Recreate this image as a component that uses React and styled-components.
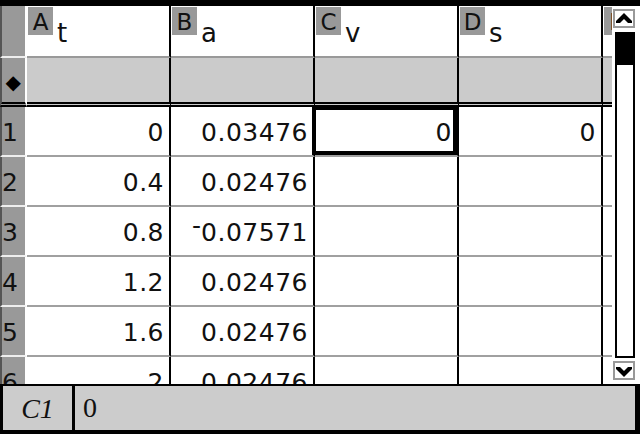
import React from "react";
import styled, { createGlobalStyle, css } from "styled-components";

const Global = createGlobalStyle`
  * { box-sizing: border-box; }
  html, body { margin: 0; padding: 0; background: #fff; }
  #root { width: 640px; height: 434px; }
`;

const Screen = styled.div`
  width: 640px;
  height: 434px;
  border-top: 6px solid #000;
  display: flex;
  flex-direction: column;
  overflow: hidden;
  background: #fff;
  font-family: "DejaVu Sans", sans-serif;
  color: #111;
`;

const Main = styled.div`
  flex: 1;
  min-height: 0;
  display: flex;
  overflow: hidden;
`;

const Sheet = styled.div`
  width: 612px;
  flex: none;
  display: grid;
  grid-template-columns: 27px repeat(4, 144px) 9px;
  grid-template-rows: 52px 49px;
  grid-auto-rows: 50px;
  align-content: start;
  overflow: hidden;
`;

const RowHead = styled.div`
  background: #999;
  border-left: 2px solid #555;
  border-right: 2px solid #fff;
  border-bottom: ${(p) => (p.$double ? "5px double #000" : "2px solid #eee")};
  display: flex;
  align-items: center;
  justify-content: ${(p) => (p.$center ? "center" : "flex-start")};
  padding-top: ${(p) => (p.$center ? "4px" : "2px")};
  font-size: 25px;
  line-height: 29px;
  letter-spacing: 0.5px;
  overflow: hidden;
`;

const Diamond = styled.span`
  font-size: 20px;
  line-height: 20px;
  color: #000;
`;

const HeadCell = styled.div`
  background: #fff;
  border-right: ${(p) => (p.$last ? "none" : "2px solid #000")};
  border-bottom: 2px solid #999;
  display: flex;
  align-items: flex-start;
  overflow: hidden;
`;

const ColLetter = styled.div`
  flex: none;
  width: 25px;
  height: 28px;
  margin: 1px 0 0 1px;
  padding-top: 1px;
  background: #999;
  font-size: 23px;
  line-height: 28px;
  text-align: center;
  color: #111;
`;

const ColName = styled.div`
  margin: 13px 0 0 4px;
  font-size: 26px;
  line-height: 29px;
`;

const FormulaCell = styled.div`
  background: #cbcbcb;
  border-right: ${(p) => (p.$last ? "none" : "2px solid #000")};
  border-bottom: 5px double #000;
`;

const Cell = styled.div`
  position: relative;
  border-right: ${(p) => (p.$last ? "none" : "2px solid #000")};
  border-bottom: 2px solid #a0a0a0;
  display: flex;
  align-items: center;
  justify-content: flex-end;
  padding: 2px 5px 0 0;
  font-size: 25px;
  line-height: 29px;
  letter-spacing: 0.5px;
  white-space: nowrap;
  ${(p) =>
    p.$selected &&
    css`
      &::after {
        content: "";
        position: absolute;
        left: -3px;
        top: -1px;
        right: 0;
        bottom: 0;
        border: 4px solid #000;
        pointer-events: none;
      }
    `}
`;

const Neg = styled.span`
  display: inline-block;
  transform: translateY(-0.3em);
  letter-spacing: 0;
`;

const ScrollCol = styled.div`
  width: 28px;
  flex: none;
  display: flex;
  flex-direction: column;
  align-items: flex-start;
  padding: 3px 0 0 1px;
  background: #fff;
`;

const ArrowBtn = styled.div`
  width: 22px;
  height: 19px;
  margin-top: ${(p) => p.$mt || 0}px;
  border: 2px solid #999;
  background: #fff;
  display: flex;
  align-items: center;
  justify-content: center;
`;

const Track = styled.div`
  margin: 4px 0 0 2px;
  width: 20px;
  height: 326px;
  border: 2px solid #000;
  border-top: none;
  background: #fff;
`;

const Thumb = styled.div`
  height: 33px;
  background: #000;
`;

const EntryBar = styled.div`
  height: 50px;
  flex: none;
  display: flex;
  border-top: 2px solid #000;
  border-bottom: 4px solid #000;
  border-left: 3px solid #000;
  border-right: 5px solid #000;
  background: #ccc;
  font-family: "Liberation Serif", serif;
  color: #111;
`;

const EntryLabel = styled.div`
  width: 72px;
  flex: none;
  border-right: 3px solid #000;
  display: flex;
  align-items: center;
  justify-content: center;
  font-style: italic;
  font-size: 28px;
  padding-top: 2px;
`;

const EntryInput = styled.div`
  flex: 1;
  display: flex;
  align-items: center;
  padding: 0 0 0 8px;
  font-size: 28px;
`;

const Chevron = ({ down }) => (
  <svg width="18" height="14" viewBox="0 0 18 14">
    <polygon
      points={
        down
          ? "1,3 5,3 9,7 13,3 17,3 17,5 9,13 1,5"
          : "1,11 5,11 9,7 13,11 17,11 17,9 9,1 1,9"
      }
      fill="#000"
    />
  </svg>
);

const columns = [
  { l: "A", n: "t" },
  { l: "B", n: "a" },
  { l: "C", n: "v" },
  { l: "D", n: "s" },
];

const rows = [
  ["0", "0.03476", "0", "0"],
  ["0.4", "0.02476", "", ""],
  ["0.8", "-0.07571", "", ""],
  ["1.2", "0.02476", "", ""],
  ["1.6", "0.02476", "", ""],
  ["2", "0.02476", "", ""],
];

const renderValue = (v) =>
  v.startsWith("-") ? (
    <>
      <Neg>-</Neg>
      {v.slice(1)}
    </>
  ) : (
    v
  );

export default function App() {
  return (
    <>
      <Global />
      <Screen>
        <Main>
          <Sheet>
            <RowHead />
            {columns.map((c) => (
              <HeadCell key={c.l}>
                <ColLetter>{c.l}</ColLetter>
                <ColName>{c.n}</ColName>
              </HeadCell>
            ))}
            <HeadCell $last>
              <ColLetter>E</ColLetter>
            </HeadCell>

            <RowHead $double $center>
              <Diamond>◆</Diamond>
            </RowHead>
            {columns.map((c) => (
              <FormulaCell key={c.l} />
            ))}
            <FormulaCell $last />

            {rows.map((r, i) => (
              <React.Fragment key={i}>
                <RowHead>{i + 1}</RowHead>
                {r.map((v, j) => (
                  <Cell key={j} $selected={i === 0 && j === 2}>
                    {renderValue(v)}
                  </Cell>
                ))}
                <Cell $last />
              </React.Fragment>
            ))}
          </Sheet>
          <ScrollCol>
            <ArrowBtn>
              <Chevron />
            </ArrowBtn>
            <Track>
              <Thumb />
            </Track>
            <ArrowBtn $mt={3}>
              <Chevron down />
            </ArrowBtn>
          </ScrollCol>
        </Main>
        <EntryBar>
          <EntryLabel>C1</EntryLabel>
          <EntryInput>0</EntryInput>
        </EntryBar>
      </Screen>
    </>
  );
}
